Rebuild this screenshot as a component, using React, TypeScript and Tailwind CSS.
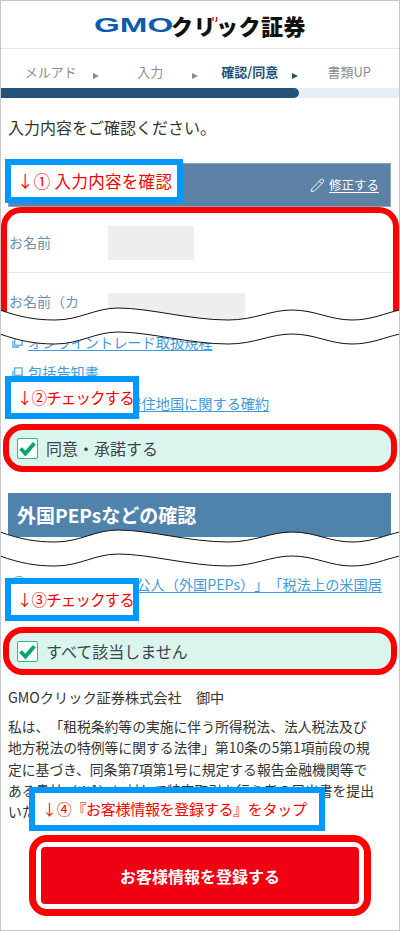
import { Pencil } from 'lucide-react';

const jp = "font-['Noto_Sans_CJK_JP','Noto_Sans',sans-serif]";

const steps = [
  { label: 'メルアド', arrow: true, active: false },
  { label: '入力', arrow: true, active: false },
  { label: '確認/同意', arrow: true, active: true },
  { label: '書類UP', arrow: false, active: false },
];

const statement = [
  '私は、「租税条約等の実施に伴う所得税法、法人税法及び',
  '地方税法の特例等に関する法律」第10条の5第1項前段の規',
  '定に基づき、同条第7項第1号に規定する報告金融機関等で',
  'ある貴社（※1）に対して特定取引を行う者の届出書を提出',
  'いたします。',
];

function Logo() {
  return (
    <div className="flex items-center">
      <span className="inline-block w-[77px] origin-left scale-x-[1.58] font-['Liberation_Sans',sans-serif] text-[21px] leading-none font-bold text-[#0c5cae]">
        GMO
      </span>
      <span className="relative text-[22px] leading-none font-black tracking-[0.5px] text-[#111]">
        クリック証券
        <svg className="absolute top-[3px] left-[41px] h-[5px] w-[6px]" viewBox="0 0 6 5">
          <path d="M1 0v4M4.5 0v3.5L3.5 5" stroke="#e60012" strokeWidth="1.3" fill="none" />
        </svg>
      </span>
    </div>
  );
}

function Wave({ className }: { className: string }) {
  const upper = 'M0 5C20 12 35 15 55 15C80 15 95 3 118 3C150 3 190 15 228 15C255 15 270 5 292 5C315 5 330 15 352 15C372 15 385 8 400 5';
  const lower = 'M0 29C20 36 35 39 55 39C80 39 95 27 118 27C150 27 190 39 228 39C255 39 270 29 292 29C315 29 330 39 352 39C372 39 385 32 400 29';
  return (
    <svg className={`absolute -left-px h-[45px] w-[400px] ${className}`} viewBox="0 0 400 45">
      <path d="M0 5C20 12 35 15 55 15C80 15 95 3 118 3C150 3 190 15 228 15C255 15 270 5 292 5C315 5 330 15 352 15C372 15 385 8 400 5V29C385 32 372 39 352 39C330 39 315 29 292 29C270 29 255 39 228 39C190 39 150 27 118 27C95 27 80 39 55 39C35 39 20 36 0 29Z" fill="#fff" />
      <path d={upper} fill="none" stroke="#111" strokeWidth="1" />
      <path d={lower} fill="none" stroke="#111" strokeWidth="1" />
    </svg>
  );
}

function Callout({ className, children }: { className: string; children: React.ReactNode }) {
  return (
    <div className={`absolute flex items-center border-[6px] border-[#0099ff] bg-white whitespace-nowrap text-[#ff0000] ${className}`}>
      {children}
    </div>
  );
}

function CheckRow({ label }: { label: string }) {
  return (
    <div className="mx-[2px] rounded-[20px] border-[6px] border-[#ff0000] bg-[#daf5ed]">
      <div className="flex h-[36px] items-center gap-[8px] pl-[8px]">
        <span className="flex h-[21px] w-[21px] items-center justify-center rounded-[2px] border border-[#25c088] bg-white">
          <svg viewBox="0 0 16 16" className="h-[17px] w-[17px]">
            <path d="M1.5 8l4.5 4.8L14.5 3" stroke="#00a86b" strokeWidth="3.6" fill="none" />
          </svg>
        </span>
        <span className="text-[16px] text-[#3a444c] [text-spacing-trim:space-all]">{label}</span>
      </div>
    </div>
  );
}

function DocLink({ label }: { label: string }) {
  return (
    <div className="flex h-[30.5px] items-center pl-[11px] text-[14.2px] text-[#3f9bdc]">
      <svg viewBox="0 0 12 12" className="mr-[5px] h-[11px] w-[11px]">
        <rect x="3" y="1" width="8" height="8" fill="none" stroke="#3f9bdc" strokeWidth="1.2" />
        <path d="M1 4v7h7" fill="none" stroke="#3f9bdc" strokeWidth="1.2" />
      </svg>
      <span className="underline underline-offset-2">{label}</span>
    </div>
  );
}

export default function App() {
  return (
    <div className={`relative h-[931px] w-[400px] overflow-hidden border border-[#c8c8c8] bg-white text-[#333] ${jp}`}>
      {/* header */}
      <div className="flex h-[48px] items-center justify-center border-b border-[#e4e7ef]">
        <Logo />
      </div>

      {/* steps */}
      <div className="grid h-[39px] grid-cols-4 pt-[7px]">
        {steps.map((s) => (
          <div key={s.label} className="relative flex items-center justify-center text-[13px]">
            <span className={s.active ? 'font-bold text-[#24527a]' : 'text-[#8c8c8c]'}>{s.label}</span>
            {s.arrow && (
              <span className={`absolute top-[17px] right-[2px] h-0 w-0 border-y-[3.5px] border-l-[6px] border-y-transparent ${s.active ? 'border-l-[#24527a]' : 'border-l-[#8c8c8c]'}`} />
            )}
          </div>
        ))}
      </div>
      <div className="h-[10px] bg-[#e8edf4]">
        <div className="h-full w-[298px] rounded-r-full bg-[#245278]" />
      </div>

      <p className="flex h-[65px] items-start pt-[16px] pl-[7px] text-[16px] leading-[26px] text-[#333]">入力内容をご確認ください。</p>

      {/* section 1 */}
      <div className="mr-[8px] ml-[7px] flex h-[44px] items-center justify-end border border-[#8aa4bd] bg-[#5d82a6] pr-[11px] text-white">
        <Pencil size={15} strokeWidth={1.5} className="mr-[4px]" />
        <span className="text-[12.5px] underline underline-offset-2">修正する</span>
      </div>
      <div className="h-[120px] overflow-hidden rounded-t-[20px] border-x-[6px] border-t-[6px] border-[#ff0000] text-[14px] text-[#6f8fb0]">
        <div className="flex h-[60px] items-center border-b border-[#e4e7ef] pl-[2px]">
          <span className="w-[99px]">お名前</span>
          <span className="h-[34px] w-[86px] bg-[#eeeeee]" />
        </div>
        <div className="flex items-start pt-[20px] pl-[2px]">
          <span className="w-[99px] leading-[16px]">お名前（カ</span>
          <span className="h-[40px] w-[137px] bg-[#eeeeee]" />
        </div>
      </div>

      {/* agreements */}
      <div className="h-[97px]">
        <DocLink label="オンライントレード取扱規程" />
        <DocLink label="包括告知書" />
        <DocLink label="特定口座に係る居住地国に関する確約" />
      </div>
      <CheckRow label="同意・承諾する" />

      {/* section 2 */}
      <div className="mt-[21px] mr-[8px] ml-[7px] flex h-[44px] items-center bg-[#4f83ab] pl-[9px] text-[19px] font-bold text-white">
        外国PEPsなどの確認
      </div>
      <div className="flex h-[90px] items-start pt-[36px] pr-[9px] pl-[11px] text-[14.2px] leading-[22px] text-[#3f9bdc] [text-spacing-trim:space-all]">
        <span className="mt-[3px] mr-[11px] h-[14px] w-[14px] shrink-0 rounded-full border border-[#3f9bdc]" />
        <span className="underline underline-offset-2">「外国の重要な公人（外国PEPs）」「税法上の米国居住者」</span>
      </div>
      <CheckRow label="すべて該当しません" />

      {/* statement */}
      <div className="px-[7px] pt-[12px] text-[13.8px] text-[#333] [text-spacing-trim:space-all]">
        <p className="text-[14.2px] leading-[20px]">GMOクリック証券株式会社　御中</p>
        <div className="mt-[9px] leading-[21.3px] whitespace-nowrap">
          {statement.map((line) => (
            <p key={line}>{line}</p>
          ))}
        </div>
      </div>

      {/* submit */}
      <div className="absolute top-[834px] left-[28px] w-[342px] rounded-[18px] border-[7px] border-[#ff0000] p-[5px]">
        <div className="flex h-[57px] items-center justify-center rounded-[4px] bg-[#ef0012] text-[16px] font-bold text-white">
          お客様情報を登録する
        </div>
      </div>

      <Wave className="top-[304px]" />
      <Wave className="top-[526px]" />

      <Callout className="top-[158px] left-[4px] h-[44px] w-[178px] pl-[6px] text-[16.5px] tracking-[0.3px]">↓① 入力内容を確認</Callout>
      <Callout className="top-[375px] left-[4px] h-[43px] w-[134px] pl-[6px] text-[15.5px] tracking-[-0.9px]">↓②チェックする</Callout>
      <Callout className="top-[577px] left-[4px] h-[43px] w-[134px] pl-[6px] text-[15.5px] tracking-[-0.9px]">↓③チェックする</Callout>
      <Callout className="top-[786px] left-[28px] h-[44px] w-[296px] pl-[7px] text-[15px] tracking-[-0.3px]">↓④『お客様情報を登録する』をタップ</Callout>
    </div>
  );
}
